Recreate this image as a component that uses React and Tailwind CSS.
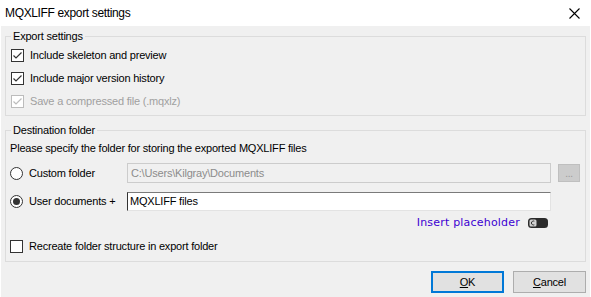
import React from "react";

function Check({ checked, disabled }) {
  const c = disabled ? "#bcbcbc" : "#333333";
  return (
    <span
      className={
        "w-[13px] h-[13px] shrink-0 border bg-white flex items-center justify-center " +
        (disabled ? "border-[#bcbcbc]" : "border-[#333333]")
      }
    >
      {checked && (
        <svg width="11" height="11" viewBox="0 0 11 11">
          <polyline points="1.5,5.5 4,8 9.5,2.5" fill="none" stroke={c} strokeWidth="1.2" />
        </svg>
      )}
    </span>
  );
}

function Radio({ checked }) {
  return (
    <span className="w-[13px] h-[13px] shrink-0 rounded-full border border-[#333333] bg-white flex items-center justify-center">
      {checked && <span className="w-[7px] h-[7px] rounded-full bg-[#333333]" />}
    </span>
  );
}

export default function App() {
  return (
    <div
      className="w-[591px] h-[297px] bg-[#f0f0f0] text-[11px] tracking-[-0.2px] text-black overflow-hidden flex flex-col border-l border-r border-[#ffffff]"
      style={{ fontFamily: "'Liberation Sans', Arial, sans-serif" }}
    >
      <div className="h-[26px] bg-white flex items-center justify-between pl-[4px] pr-[10px] shrink-0">
        <span className="text-[12px] leading-[16px] tracking-[-0.35px]">MQXLIFF export settings</span>
        <svg width="11" height="11" viewBox="0 0 11 11">
          <path d="M0.5 0.5 L10.5 10.5 M10.5 0.5 L0.5 10.5" stroke="#000" strokeWidth="1.1" />
        </svg>
      </div>

      <fieldset className="mt-[2px] mx-[4px] border border-[#dcdcdc] px-[5px] pb-[2px]">
        <legend className="px-[2px] leading-[16px]">Export settings</legend>
        <div className="flex flex-col">
          <label className="h-[23px] flex items-center gap-[6px]">
            <Check checked />
            <span>Include skeleton and preview</span>
          </label>
          <label className="h-[23px] flex items-center gap-[6px]">
            <Check checked />
            <span>Include major version history</span>
          </label>
          <label className="h-[23px] flex items-center gap-[6px] text-[#a0a0a0]">
            <Check checked disabled />
            <span>Save a compressed file (.mqxlz)</span>
          </label>
        </div>
      </fieldset>

      <fieldset className="mt-[6px] mx-[4px] border border-[#dcdcdc] px-[4px] pb-[7px]">
        <legend className="ml-[1px] px-[2px] leading-[16px]">Destination folder</legend>
        <div className="mt-[2px] h-[16px] leading-[16px]">
          Please specify the folder for storing the exported MQXLIFF files
        </div>
        <div className="mt-[7px] h-[20px] flex items-center">
          <div className="w-[117px] flex items-center gap-[6px]">
            <Radio />
            <span>Custom folder</span>
          </div>
          <div className="w-[424px] h-[20px] border border-[#cccccc] bg-[#f0f0f0] flex items-center px-[3px] text-[#8c8c8c]">
            C:\Users\Kilgray\Documents
          </div>
          <div className="ml-[7px] w-[22px] h-[18px] border border-[#bfbfbf] bg-[#cccccc] flex items-center justify-center text-[#9a9a9a] text-[10px] leading-none pt-[2px]">
            ...
          </div>
        </div>
        <div className="mt-[9px] h-[19px] flex items-center">
          <div className="w-[117px] flex items-center gap-[6px]">
            <Radio checked />
            <span>User documents +</span>
          </div>
          <div className="w-[424px] h-[19px] border border-[#e3e3e3] border-t-[#7a7a7a] border-l-[#333333] bg-white flex items-center px-[2px]">
            MQXLIFF files
          </div>
        </div>
        <div className="mt-[5px] h-[14px] flex items-center justify-end pr-[33px] gap-[8px]">
          <span
            className="text-[11px] text-[#3c00d2] tracking-[0.2px]"
            style={{ fontFamily: "'DejaVu Sans', Verdana, sans-serif" }}
          >
            Insert placeholder
          </span>
          <svg width="20" height="10" viewBox="0 0 20 10">
            <rect x="0" y="0" width="20" height="10" rx="3.5" fill="#2b2b2b" />
            <rect x="1.5" y="1.5" width="7" height="7" rx="1.5" fill="#d0d0d0" />
            <path d="M6.3 3.2 A2 2 0 1 0 6.3 6.8" fill="none" stroke="#2b2b2b" strokeWidth="1" />
          </svg>
        </div>
        <label className="mt-[8px] h-[16px] flex items-center gap-[6px]">
          <Check />
          <span>Recreate folder structure in export folder</span>
        </label>
      </fieldset>

      <div className="mt-[9px] flex justify-end gap-[9px] pr-[4px]">
        <button className="w-[73px] h-[22px] border-2 border-[#0078d7] bg-[#e1e1e1] flex items-center justify-center">
          <span>
            <span className="underline">O</span>K
          </span>
        </button>
        <button className="w-[73px] h-[22px] border border-[#adadad] bg-[#e1e1e1] flex items-center justify-center">
          <span>
            <span className="underline">C</span>ancel
          </span>
        </button>
      </div>
    </div>
  );
}
